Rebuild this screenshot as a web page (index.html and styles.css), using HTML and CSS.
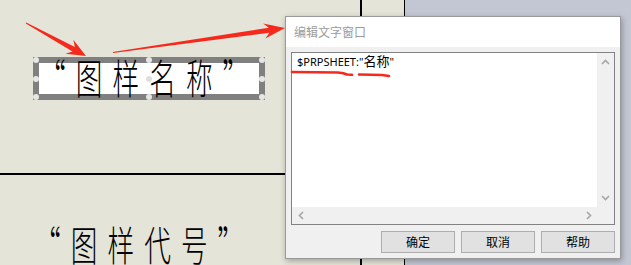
FILE: index.html
```html
<!DOCTYPE html>
<html lang="zh-CN">
<head>
    <meta charset="UTF-8">
    <meta name="viewport" content="width=device-width, initial-scale=1.0">
    <title>编辑文字窗口</title>
    <link rel="stylesheet" href="styles.css">
</head>
<body>
    <div class="workspace">
        <div class="paper">
            <div class="cell cell-top">
                <div class="textframe">
                    <span class="label">“图样名称”</span>
                    <div class="handles">
                        <div class="handle-row"><i></i><i></i><i></i></div>
                        <div class="handle-row"><i></i><i class="center"></i><i></i></div>
                        <div class="handle-row"><i></i><i></i><i></i></div>
                    </div>
                </div>
            </div>
            <div class="cell cell-side"></div>
            <div class="cell cell-bottom">
                <span class="label label-low">“图样代号”</span>
            </div>
        </div>
        <div class="outside"></div>
    </div>

    <div class="dialog">
        <div class="dialog-title">编辑文字窗口</div>
        <div class="dialog-body">
            <div class="editbox">
                <div class="edit-main">
                    <div class="edit-text">$PRPSHEET:"<span class="cjk">名称</span>"</div>
                    <div class="vscroll">
                        <svg width="9" height="6" viewBox="0 0 9 6"><polyline points="1,5 4.5,1.5 8,5" /></svg>
                        <svg width="9" height="6" viewBox="0 0 9 6"><polyline points="1,1 4.5,4.5 8,1" /></svg>
                    </div>
                </div>
                <div class="hscroll">
                    <div class="hscroll-track">
                        <svg width="6" height="9" viewBox="0 0 6 9"><polyline points="5,1 1.5,4.5 5,8" /></svg>
                        <svg width="6" height="9" viewBox="0 0 6 9"><polyline points="1,1 4.5,4.5 1,8" /></svg>
                    </div>
                    <div class="corner"></div>
                </div>
            </div>
            <div class="buttons">
                <button class="btn">确定</button>
                <button class="btn">取消</button>
                <button class="btn">帮助</button>
            </div>
        </div>
    </div>

    <!-- red marks drawn over the screenshot -->
    <svg class="marks" width="631" height="265" viewBox="0 0 631 265">
        <polygon points="26.2,22.6 74.9,47.1 73.3,39.8 86,56 65.5,53.8 72.5,51.5 25.8,23.4" />
        <polygon points="112.9,52 268.8,27.8 263.1,23.5 285,28 265.3,38.4 269.5,32.8 113.1,53" />
        <path d="M292,72 L338,72.5 Q344,73 347,74.5 L352,74.8" />
        <path d="M359,74.5 L382,75 L389,76" />
    </svg>
</body>
</html>
```

FILE: styles.css
```css
html, body {
    margin: 0;
    padding: 0;
}
body {
    width: 631px;
    height: 265px;
    overflow: hidden;
    position: relative;
    font-family: "Noto Sans CJK SC", sans-serif;
}
.workspace {
    display: flex;
    height: 265px;
}
.paper {
    display: grid;
    grid-template-columns: 362px 42px;
    grid-template-rows: 175px 1fr;
    background-color: #e4e4d8;
    border-right: 1px solid #000;
}
.outside {
    flex: 1;
    background-color: #c3c7d3;
}
.cell {
    box-sizing: border-box;
}
.cell-top {
    grid-column: 1;
    grid-row: 1;
    border-right: 2px solid #000;
    border-bottom: 2px solid #000;
    padding: 57px 0 0 33px;
}
.cell-side {
    grid-column: 2;
    grid-row: 1 / 3;
}
.cell-bottom {
    grid-column: 1;
    grid-row: 2;
    border-right: 2px solid #000;
    padding: 55px 0 0 34px;
}
.textframe {
    position: relative;
    box-sizing: border-box;
    width: 232px;
    height: 43px;
    border: 6px solid #808080;
    background-color: #fff;
}
.label {
    display: block;
    width: 400px;
    font-size: 41px;
    line-height: 41px;
    font-weight: 300;
    letter-spacing: 15.5px;
    color: #000;
    white-space: nowrap;
    transform: scaleX(0.65);
    transform-origin: 0 0;
    margin-top: -7px;
}
.handles {
    position: absolute;
    top: -3px;
    left: -3px;
    right: -3px;
    bottom: -3px;
    display: flex;
    flex-direction: column;
    justify-content: space-between;
}
.handle-row {
    display: flex;
    justify-content: space-between;
    height: 0;
}
.handle-row i {
    display: block;
    width: 6px;
    height: 6px;
    margin: -3px;
    border-radius: 50%;
    background-color: #e6e6e6;
}
.handle-row i.center {
    background-color: #dedede;
}

.dialog {
    position: absolute;
    left: 285px;
    top: 16px;
    width: 336px;
    box-sizing: border-box;
    border: 1px solid #9a9a9a;
    background-color: #f0f0f0;
    box-shadow: 1px 2px 6px rgba(0, 0, 0, 0.3);
}
.dialog-title {
    height: 30px;
    line-height: 30px;
    padding-left: 8px;
    background-color: #fff;
    font-size: 12px;
    color: #9b9b9b;
}
.dialog-body {
    display: flex;
    flex-direction: column;
    gap: 6px;
    padding: 5px;
}
.editbox {
    display: flex;
    flex-direction: column;
    height: 173px;
    box-sizing: border-box;
    border: 1px solid #828282;
    background-color: #fff;
}
.edit-main {
    flex: 1;
    display: flex;
}
.edit-text {
    flex: 1;
    padding: 1px 5px;
    font-family: "Noto Sans", "Noto Sans CJK SC", sans-serif;
    font-size: 11px;
    line-height: 14px;
    color: #000;
}
.edit-text .cjk {
    font-family: "Noto Sans CJK SC", sans-serif;
    font-size: 13px;
}
.vscroll {
    width: 17px;
    display: flex;
    flex-direction: column;
    justify-content: space-between;
    align-items: center;
    padding: 6px 0 6px;
    box-sizing: border-box;
    background-color: #f0f0f0;
}
.hscroll {
    display: flex;
    height: 17px;
    background-color: #f0f0f0;
}
.hscroll-track {
    flex: 1;
    display: flex;
    justify-content: space-between;
    align-items: center;
    padding: 0 5px 0 6px;
}
.corner {
    width: 17px;
}
.vscroll polyline, .hscroll polyline {
    fill: none;
    stroke: #a6a6a6;
    stroke-width: 1.6;
}
.buttons {
    display: flex;
    justify-content: flex-end;
    gap: 6px;
}
.btn {
    width: 74px;
    height: 22px;
    box-sizing: border-box;
    padding: 0;
    border: 1px solid #adadad;
    background-color: #e1e1e1;
    font-family: "Noto Sans CJK SC", sans-serif;
    font-size: 12px;
    line-height: 20px;
    color: #000;
}

.marks {
    position: absolute;
    left: 0;
    top: 0;
    pointer-events: none;
}
.marks polygon {
    fill: #f52a1c;
}
.marks path {
    fill: none;
    stroke: #f52a1c;
    stroke-width: 2.6;
    stroke-linecap: round;
    stroke-linejoin: round;
}
```
